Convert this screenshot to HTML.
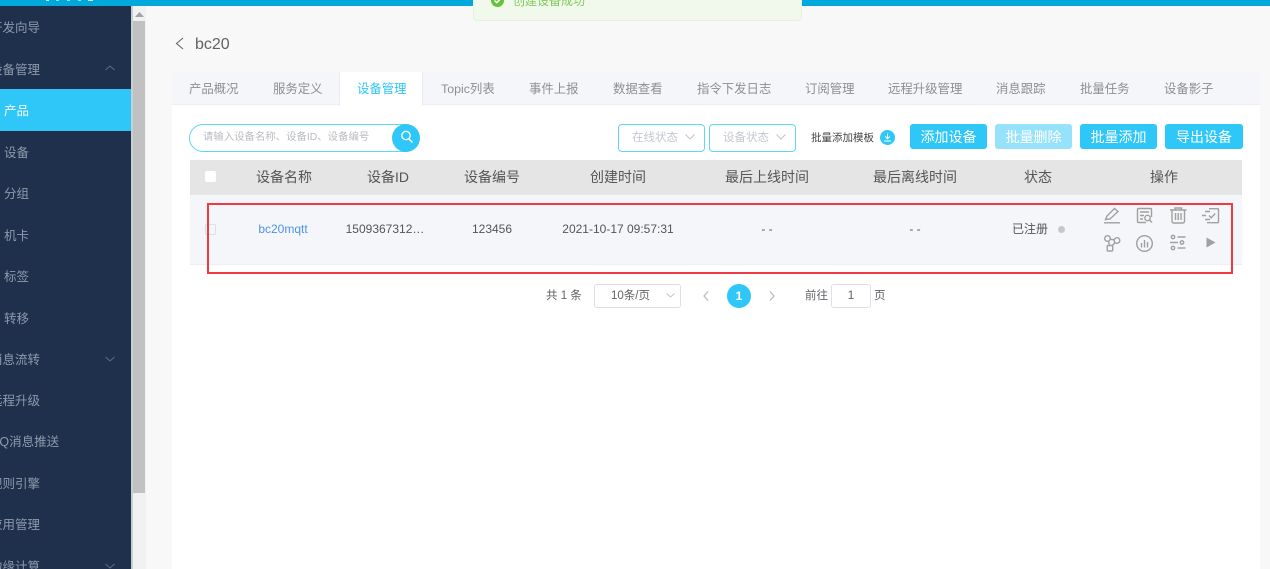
<!DOCTYPE html>
<html lang="zh-CN"><head><meta charset="utf-8"><title>设备管理</title>
<style>
html,body{margin:0;padding:0;width:1270px;height:569px;overflow:hidden}
#w{position:absolute;left:0;top:0;width:1270px;height:569px;overflow:hidden;background:#f8f8f8;font-family:"Liberation Sans","Noto Sans CJK SC",sans-serif;color:#606266}
.a{position:absolute;white-space:nowrap}
.n{position:absolute;white-space:nowrap;font-size:12.500px;color:#8e9aad;line-height:18px}
.t{position:absolute;top:80px;white-space:nowrap;font-size:12.400px;line-height:18px;color:#8f8f8f}
.h{position:absolute;top:168px;white-space:nowrap;font-size:14px;line-height:18px;color:#555;transform:translateX(-50%)}
.c{position:absolute;top:221px;white-space:nowrap;font-size:12px;line-height:17px;color:#555;transform:translateX(-50%)}
.b{position:absolute;top:124px;height:25px;line-height:27px;background:#2ec7f8;color:#fff;text-align:center;font-size:14px;border-radius:3px}
.s{position:absolute;top:124px;height:26px;border:1px solid #5ed6f6;border-radius:4px;background:#fff;color:#c4c8d0;font-size:11.500px;line-height:26px;box-sizing:content-box}
svg{position:absolute;overflow:visible}
.i{fill:none;stroke:#a0a0a0;stroke-width:1.400}
</style></head><body><div id="w">
<div class="a" style="left:0;top:0;width:1270px;height:6px;background:#00a8dc"></div>
<div class="a" style="left:46px;top:0;width:3px;height:1px;background:#cfeefa"></div>
<div class="a" style="left:56px;top:0;width:3px;height:1px;background:#9adcf3"></div>
<div class="a" style="left:67px;top:0;width:3px;height:1px;background:#9adcf3"></div>
<div class="a" style="left:78px;top:0;width:3px;height:1px;background:#9adcf3"></div>
<div class="a" style="left:88px;top:0;width:5px;height:1px;background:#cfeefa"></div>
<div class="a" style="left:0;top:6px;width:131px;height:563px;background:#1e304b"></div>
<div class="a" style="left:131px;top:6px;width:2px;height:563px;background:#c9ced6"></div>
<div class="a" style="left:133px;top:6px;width:13px;height:563px;background:#f1f1f1"></div>
<div class="a" style="left:133px;top:21px;width:12px;height:472px;background:#c1c1c1"></div>
<svg style="left:135px;top:12px" width="9" height="5"><path d="M4.500 0L9 5H0Z" fill="#a3a3a3"/></svg>
<div class="a" style="left:0;top:89px;width:131px;height:42px;background:#2ec7f8"></div>

<div class="n" style="left:-10px;top:19px">开发向导</div>
<div class="n" style="left:-10px;top:61px">设备管理</div>
<svg style="left:105px;top:65px" width="10" height="6"><path d="M.5 5L5 1l4.500 4" fill="none" stroke="#5d6c84"/></svg>
<div class="n" style="left:4px;top:102px;color:#fff">产品</div>
<div class="n" style="left:4px;top:144px">设备</div>
<div class="n" style="left:4px;top:185px">分组</div>
<div class="n" style="left:4px;top:227px">机卡</div>
<div class="n" style="left:4px;top:268px">标签</div>
<div class="n" style="left:4px;top:310px">转移</div>
<div class="n" style="left:-10px;top:351px">消息流转</div>
<svg style="left:105px;top:356px" width="10" height="6"><path d="M.5 1L5 5l4.500-4" fill="none" stroke="#5d6c84"/></svg>
<div class="n" style="left:-10px;top:392px">远程升级</div>
<div class="n" style="left:-11px;top:433px">MQ消息推送</div>
<div class="n" style="left:-10px;top:475px">规则引擎</div>
<div class="n" style="left:-10px;top:516px">应用管理</div>
<div class="n" style="left:-10px;top:558px">边缘计算</div>
<svg style="left:105px;top:563px" width="10" height="6"><path d="M.5 1L5 5l4.500-4" fill="none" stroke="#5d6c84"/></svg>

<div class="a" style="left:473px;top:-10px;width:329px;height:31px;background:#f0f9eb;border:1px solid #e4f3da;border-radius:4px;box-sizing:border-box"></div>
<svg style="left:491px;top:-6px" width="13" height="13"><circle cx="6.500" cy="6.500" r="6.500" fill="#67c23a"/><path d="M3.500 6.500l2.200 2.200 3.800-3.800" fill="none" stroke="#fff" stroke-width="1.500"/></svg>
<div class="a" style="left:513px;top:-7px;font-size:12px;line-height:16px;color:#7fcb5c">创建设备成功</div>

<svg style="left:175px;top:37px" width="9" height="13"><path d="M8 1L1.500 6.500 8 12" fill="none" stroke="#666" stroke-width="1.100"/></svg>
<div class="a" style="left:195px;top:36px;font-size:16px;line-height:18px;color:#606266">bc20</div>

<div class="a" style="left:172px;top:72px;width:1088px;height:497px;background:#fff"></div>
<div class="a" style="left:172px;top:72px;width:1088px;height:33px;background:#f5f6fa;border-bottom:1px solid #eceef3;box-sizing:border-box"></div>
<div class="a" style="left:339px;top:72px;width:84px;height:34px;background:#fff;border-left:1px solid #e9ebf0;border-right:1px solid #e9ebf0;box-sizing:border-box"></div>
<div class="t" style="left:189px">产品概况</div>
<div class="t" style="left:273px">服务定义</div>
<div class="t" style="left:357px;color:#2ec7f8">设备管理</div>
<div class="t" style="left:441px">Topic列表</div>
<div class="t" style="left:529px">事件上报</div>
<div class="t" style="left:613px">数据查看</div>
<div class="t" style="left:697px">指令下发日志</div>
<div class="t" style="left:805px">订阅管理</div>
<div class="t" style="left:888px">远程升级管理</div>
<div class="t" style="left:996px">消息跟踪</div>
<div class="t" style="left:1080px">批量任务</div>
<div class="t" style="left:1164px">设备影子</div>

<div class="a" style="left:189px;top:124px;width:230px;height:28px;border:1px solid #5ed6f6;border-radius:14px;box-sizing:border-box;background:#fff"></div>
<div class="a" style="left:203px;top:130px;font-size:10.400px;line-height:16px;color:#b9bcc2">请输入设备名称、设备ID、设备编号</div>
<div class="a" style="left:392px;top:124px;width:28px;height:28px;border-radius:50%;background:#2ec7f8"></div>
<svg style="left:400px;top:130px" width="14" height="14"><circle cx="6" cy="5.500" r="4.200" fill="none" stroke="#fff" stroke-width="1.300"/><path d="M9 9l3.500 3.500" stroke="#fff" stroke-width="1.500"/></svg>

<div class="s" style="left:618px;width:85px"><span style="position:absolute;left:13px;top:0">在线状态</span></div>
<svg style="left:685px;top:134px" width="10" height="6"><path d="M.5 .5L5 5 9.500 .5" fill="none" stroke="#c0c4cc"/></svg>
<div class="s" style="left:709px;width:85px"><span style="position:absolute;left:13px;top:0">设备状态</span></div>
<svg style="left:776px;top:134px" width="10" height="6"><path d="M.5 .5L5 5 9.500 .5" fill="none" stroke="#c0c4cc"/></svg>
<div class="a" style="left:811px;top:130px;font-size:10.500px;line-height:16px;color:#444">批量添加模板</div>
<svg style="left:880px;top:130px" width="15" height="15"><circle cx="7.500" cy="7.500" r="7.500" fill="#2ec7f8"/><path d="M7.500 3.500v5M5.200 6.500l2.300 2.300 2.300-2.300M4 11h7" fill="none" stroke="#fff"/></svg>

<div class="b" style="left:910px;width:77px">添加设备</div>
<div class="b" style="left:995px;width:77px;background:#97e2fb">批量删除</div>
<div class="b" style="left:1080px;width:77px">批量添加</div>
<div class="b" style="left:1165px;width:78px">导出设备</div>

<div class="a" style="left:190px;top:160px;width:1052px;height:35px;background:#e5e5e5"></div>
<div class="a" style="left:190px;top:195px;width:1052px;height:70px;background:#f5f6fa;border-bottom:1px solid #eceef3;box-sizing:border-box"></div>
<div class="a" style="left:205px;top:171px;width:11px;height:11px;background:#fff;border-radius:2px"></div>
<div class="a" style="left:205px;top:224px;width:11px;height:11px;background:#f5f6fa;border:1px solid #dcdfe6;border-radius:2px;box-sizing:border-box"></div>

<div class="h" style="left:284px">设备名称</div>
<div class="h" style="left:388px">设备ID</div>
<div class="h" style="left:492px">设备编号</div>
<div class="h" style="left:618px">创建时间</div>
<div class="h" style="left:767px">最后上线时间</div>
<div class="h" style="left:915px">最后离线时间</div>
<div class="h" style="left:1038px">状态</div>
<div class="h" style="left:1164px">操作</div>

<div class="c" style="left:283px;color:#4d94e8">bc20mqtt</div>
<div class="c" style="left:385px">1509367312…</div>
<div class="c" style="left:492px">123456</div>
<div class="c" style="left:618px">2021-10-17 09:57:31</div>
<div class="c" style="left:767px">- -</div>
<div class="c" style="left:915px">- -</div>
<div class="c" style="left:1030px">已注册</div>
<div class="a" style="left:1058px;top:226px;width:7px;height:7px;border-radius:50%;background:#c8c8c8"></div>

<div class="a" style="left:207px;top:203px;width:1026px;height:71px;border:2px solid #ee3b43;box-sizing:border-box"></div>

<!-- edit -->
<svg style="left:1104px;top:207px" width="17" height="17"><path class="i" d="M1.500 12.500L3 9 10.500 1.500 14 4.500 6 12z"/><path class="i" d="M0 15.800h16"/></svg>
<!-- detail -->
<svg style="left:1137px;top:208px" width="16" height="16"><path class="i" d="M9 14.500H1.500a1 1 0 0 1-1-1V1.500a1 1 0 0 1 1-1h12a1 1 0 0 1 1 1V9M3 4h9M3 7.500h4M3 11h3"/><circle class="i" cx="10.500" cy="10" r="2.700"/><path class="i" d="M12.500 12l2.500 2.500"/></svg>
<!-- trash -->
<svg style="left:1170px;top:207px" width="17" height="17"><path class="i" d="M0 3h16.500M5 3V1h6.500v2M2 3v11.500a1.500 1.500 0 0 0 1.500 1.500h9.500a1.500 1.500 0 0 0 1.500-1.500V3M5.500 6v7M8.200 6v7M11 6v7"/></svg>
<!-- task -->
<svg style="left:1202px;top:208px" width="17" height="16"><path class="i" d="M7 .7h8.500a1 1 0 0 1 1 1v12a1 1 0 0 1-1 1H5M3 3.500h5M0 7.500h4M3 11.500h5M7 7.500l2.200 2.300 4-4.300"/></svg>
<!-- network -->
<svg style="left:1104px;top:235px" width="17" height="18"><circle class="i" cx="3.500" cy="3.500" r="2.800"/><circle class="i" cx="13" cy="5.500" r="2.800"/><rect class="i" x="3.200" y="10.500" width="5.500" height="5.500" rx="1"/><path class="i" d="M6.200 4.200l4 .6M4.500 6.200l1 4.300M11 7.500L8 11"/></svg>
<!-- chart -->
<svg style="left:1136px;top:235px" width="17" height="17"><circle class="i" cx="8.500" cy="8.500" r="7.800"/><path class="i" stroke-width="1.600" d="M5.500 8v4.500M8.500 5v7.500M11.500 7v5.500"/></svg>
<!-- sliders -->
<svg style="left:1170px;top:235px" width="16" height="16"><circle class="i" cx="3" cy="2" r="1.700"/><path class="i" d="M7.500 2H15.500M0 7.500h8"/><circle class="i" cx="12" cy="7.500" r="1.700"/><circle class="i" cx="3" cy="13" r="1.700"/><path class="i" d="M7.500 13H15.500"/></svg>
<!-- play -->
<svg style="left:1206px;top:237px" width="10" height="11"><path d="M.5 .5L9.500 5.500 .5 10.500Z" fill="#a0a0a0"/></svg>

<div class="a" style="left:546px;top:288px;font-size:11.500px;line-height:17px;color:#606266">共 1 条</div>
<div class="a" style="left:594px;top:284px;width:87px;height:24px;border:1px solid #dcdfe6;border-radius:3px;box-sizing:border-box;background:#fff"></div>
<div class="a" style="left:611px;top:288px;font-size:11.500px;line-height:17px;color:#606266">10条/页</div>
<svg style="left:666px;top:293px" width="9" height="5"><path d="M.5 .5L4.500 4 8.500 .5" fill="none" stroke="#c0c4cc"/></svg>
<svg style="left:703px;top:291px" width="6" height="10"><path d="M5 .5L1 5l4 4.500" fill="none" stroke="#b4b8c0" stroke-width="1.200"/></svg>
<div class="a" style="left:727px;top:284px;width:24px;height:24px;border-radius:50%;background:#2ec7f8;color:#fff;font-size:12px;font-weight:bold;line-height:24px;text-align:center">1</div>
<svg style="left:769px;top:291px" width="6" height="10"><path d="M1 .5L5 5 1 9.500" fill="none" stroke="#b4b8c0" stroke-width="1.200"/></svg>
<div class="a" style="left:805px;top:288px;font-size:11.500px;line-height:17px;color:#606266">前往</div>
<div class="a" style="left:831px;top:284px;width:40px;height:24px;border:1px solid #dcdfe6;border-radius:3px;box-sizing:border-box;background:#fff;text-align:center;font-size:12px;line-height:21px;color:#606266">1</div>
<div class="a" style="left:874px;top:288px;font-size:11.500px;line-height:17px;color:#606266">页</div>
</div></body></html>
